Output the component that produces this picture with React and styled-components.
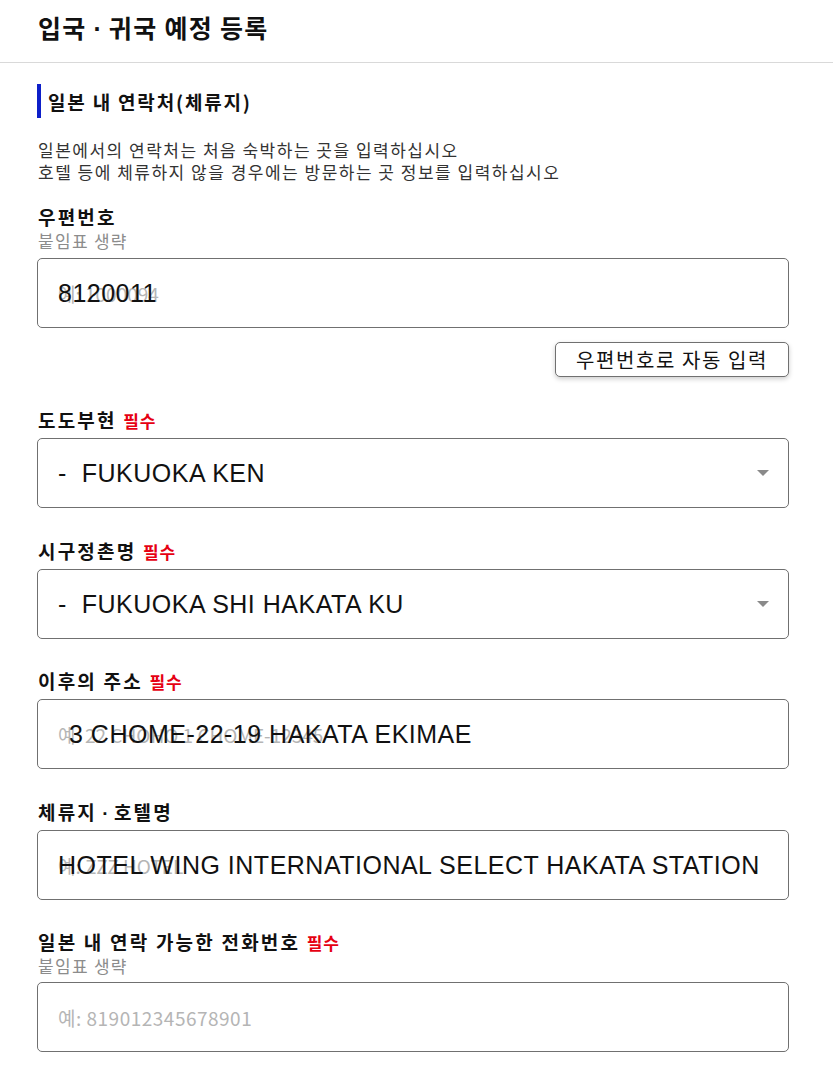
import React from 'react';
import styled, { createGlobalStyle } from 'styled-components';

const GlobalStyle = createGlobalStyle`
  body {
    margin: 0;
    background: #fff;
    font-family: "Noto Sans CJK KR", "Noto Sans", sans-serif;
    color: #111;
  }
`;

export default function App() {
  return (
    <>
      <GlobalStyle />
      <Header>
        <Title>입국<Dot> · </Dot>귀국 예정 등록</Title>
      </Header>
      <Main>
        <SectionTitle>일본 내 연락처(체류지)</SectionTitle>
        <Description>
          일본에서의 연락처는 처음 숙박하는 곳을 입력하십시오<br />
          호텔 등에 체류하지 않을 경우에는 방문하는 곳 정보를 입력하십시오
        </Description>

        {/* POSTAL CODE */}
        <Field $gap={22}>
          <Label>우편번호</Label>
          <Hint>붙임표 생략</Hint>
          <InputBox>
            <Ghost>예: 1000094</Ghost>
            <Value>8120011</Value>
          </InputBox>
          <ButtonRow>
            <AutoButton type="button">우편번호로 자동 입력</AutoButton>
          </ButtonRow>
        </Field>

        {/* PREFECTURE */}
        <Field>
          <Label>도도부현 <Required>필수</Required></Label>
          <InputBox>
            <Value>-&nbsp;&nbsp;FUKUOKA KEN</Value>
            <Caret />
          </InputBox>
        </Field>

        {/* CITY */}
        <Field>
          <Label>시구정촌명 <Required>필수</Required></Label>
          <InputBox>
            <Value>-&nbsp;&nbsp;FUKUOKA SHI HAKATA KU</Value>
            <Caret />
          </InputBox>
        </Field>

        {/* ADDRESS */}
        <Field $gap={30}>
          <Label>이후의 주소 <Required>필수</Required></Label>
          <InputBox>
            <Ghost>예: 22 CHOHO 1 CHOME-12345</Ghost>
            <Value $indent>3 CHOME-22-19 HAKATA EKIMAE</Value>
          </InputBox>
        </Field>

        {/* HOTEL */}
        <Field>
          <Label>체류지<Dot> · </Dot>호텔명</Label>
          <InputBox>
            <Ghost>예: ZZZ HOTEL</Ghost>
            <Value>HOTEL WING INTERNATIONAL SELECT HAKATA STATION</Value>
          </InputBox>
        </Field>

        {/* PHONE */}
        <Field $gap={30}>
          <Label>일본 내 연락 가능한 전화번호 <Required>필수</Required></Label>
          <Hint>붙임표 생략</Hint>
          <InputBox $tight>
            <Placeholder>예: 819012345678901</Placeholder>
          </InputBox>
        </Field>
      </Main>
    </>
  );
}

// STYLES //

const Header = styled.header`
  height: 63px;
  box-sizing: border-box;
  border-bottom: 1px solid #d9d9d9;
  padding: 9px 0 0 38px;
`;

const Title = styled.h1`
  margin: 0;
  font-size: 25px;
  line-height: 36px;
  letter-spacing: 1.3px;
  font-weight: 700;
  color: #111;
`;

const Dot = styled.span`
  font-family: "Liberation Sans", Arial, sans-serif;
  font-weight: 700;
  letter-spacing: 0;
`;

const Main = styled.main`
  padding: 21px 44px 40px 37px;
`;

const SectionTitle = styled.h2`
  margin: 0;
  height: 34px;
  display: flex;
  align-items: center;
  border-left: 4px solid #0d1fc9;
  padding-left: 7px;
  font-size: 19px;
  letter-spacing: 1.8px;
  font-weight: 700;
  color: #111;
`;

const Description = styled.p`
  margin: 21px 0 0 1px;
  font-size: 17px;
  letter-spacing: 1.5px;
  line-height: 22px;
  color: #333;
`;

const Field = styled.div`
  margin-top: ${p => p.$gap ?? 31}px;
`;

const Label = styled.div`
  height: 24px;
  font-size: 19px;
  letter-spacing: 2.2px;
  line-height: 24px;
  font-weight: 700;
  color: #111;
  padding-left: 1px;
`;

const Required = styled.span`
  color: #e60012;
  font-size: 17px;
  letter-spacing: 1px;
`;

const Hint = styled.div`
  height: 23px;
  font-size: 17px;
  letter-spacing: 1.3px;
  line-height: 23px;
  color: #8c8c8c;
  padding-left: 1px;
`;

const InputBox = styled.div`
  position: relative;
  margin-top: ${p => (p.$tight ? 5 : 6)}px;
  height: 70px;
  box-sizing: border-box;
  border: 1px solid #707070;
  border-radius: 5px;
  display: flex;
  align-items: center;
  padding: 0 20px;
  background: #fff;
`;

const Value = styled.span`
  position: relative;
  font-family: "Liberation Sans", Arial, sans-serif;
  font-size: 25px;
  letter-spacing: 0.5px;
  color: #111;
  white-space: nowrap;
  padding-left: ${p => (p.$indent ? '11px' : '0')};
`;

const Ghost = styled.span`
  position: absolute;
  left: 20px;
  top: 50%;
  transform: translateY(-50%);
  font-size: 19px;
  color: #b5b5b5;
  white-space: nowrap;
`;

const Placeholder = styled.span`
  font-size: 19px;
  letter-spacing: 0.5px;
  color: #b5b5b5;
`;

const Caret = styled.span`
  position: absolute;
  right: 19px;
  top: 50%;
  margin-top: -3px;
  width: 0;
  height: 0;
  border-left: 6px solid transparent;
  border-right: 6px solid transparent;
  border-top: 6px solid #8a8a8a;
`;

const ButtonRow = styled.div`
  display: flex;
  justify-content: flex-end;
  margin-top: 14px;
`;

const AutoButton = styled.button`
  width: 234px;
  height: 35px;
  box-sizing: border-box;
  border: 1px solid #707070;
  border-radius: 5px;
  background: #fff;
  box-shadow: 0 2px 5px rgba(0, 0, 0, 0.2);
  font-family: "Noto Sans CJK KR", sans-serif;
  font-size: 20px;
  letter-spacing: 1.6px;
  color: #111;
  padding: 0;
`;
